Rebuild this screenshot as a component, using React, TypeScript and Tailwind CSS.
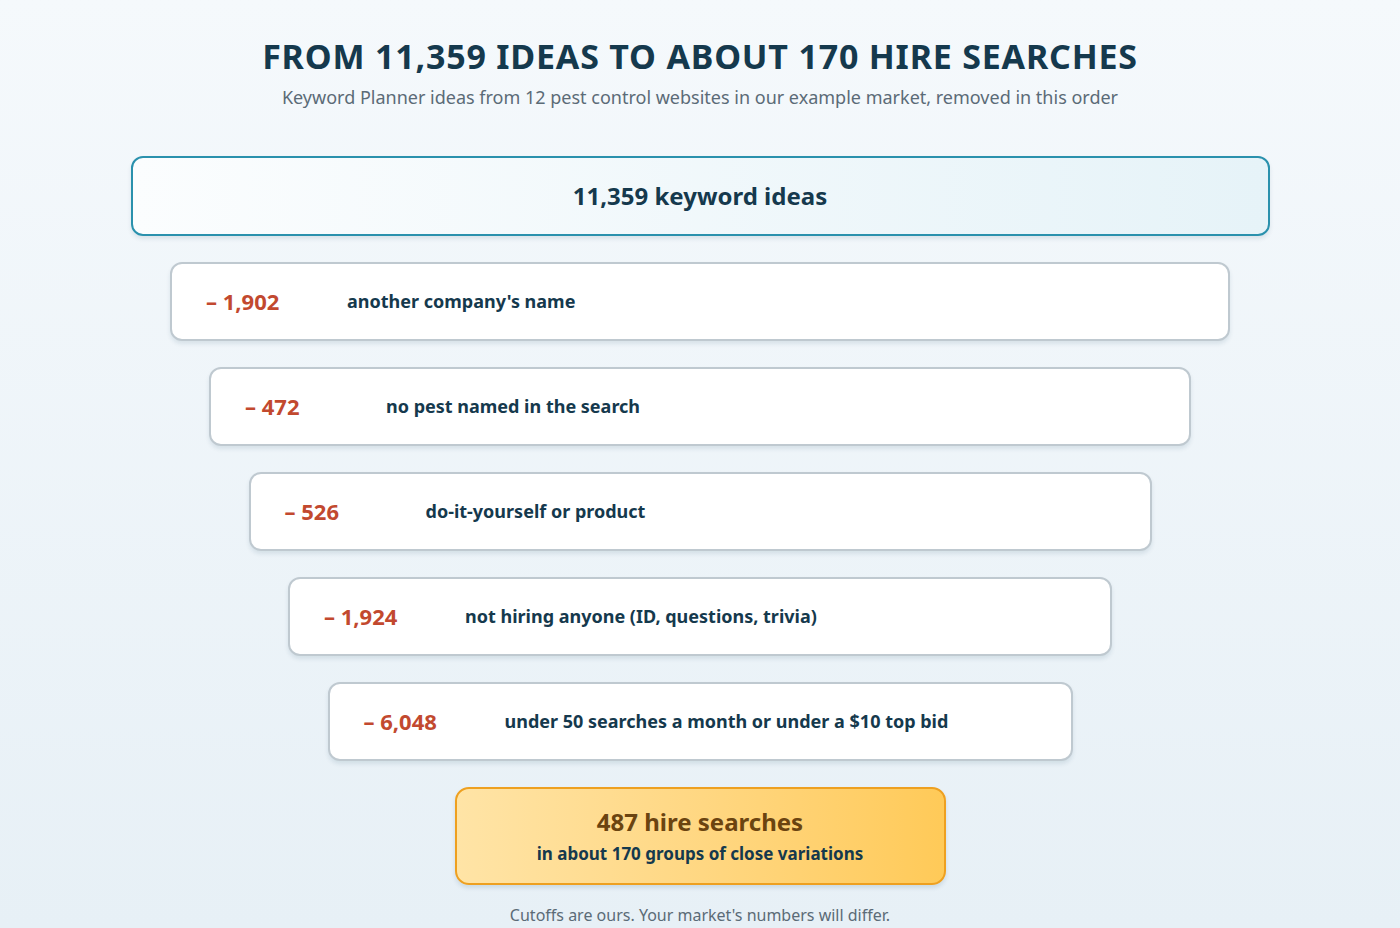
export default function App() {
  const rows = [
    { n: "– 1,902", t: "another company's name", w: "w-[1060px]" },
    { n: "– 472", t: "no pest named in the search", w: "w-[982px]" },
    { n: "– 526", t: "do-it-yourself or product", w: "w-[903px]" },
    { n: "– 1,924", t: "not hiring anyone (ID, questions, trivia)", w: "w-[824px]" },
    { n: "– 6,048", t: "under 50 searches a month or under a $10 top bid", w: "w-[745px]" },
  ];
  return (
    <div className="w-[1400px] h-[928px] overflow-hidden bg-gradient-to-b from-[#f5f9fc] to-[#e7f0f6] flex flex-col items-center font-['Liberation_Sans']">
      <h1 className="mt-[35px] text-[34px] leading-[42px] font-bold tracking-[0.8px] text-[#15394d]">FROM 11,359 IDEAS TO ABOUT 170 HIRE SEARCHES</h1>
      <p className="mt-[9px] text-[18px] leading-[22px] text-[#5b6b77]">Keyword Planner ideas from 12 pest control websites in our example market, removed in this order</p>
      <div className="mt-[48px] flex flex-col items-center gap-[26px]">
        <div className="w-[1139px] h-[80px] rounded-[12px] border-2 border-[#2a91ad] bg-gradient-to-r from-[#fbfdfe] to-[#e6f3f8] shadow-[0_3px_4px_rgba(0,60,90,0.1)] flex items-center justify-center text-[24px] font-bold text-[#15394d]">
          11,359 keyword ideas
        </div>
        {rows.map((r) => (
          <div key={r.n} className={`${r.w} h-[79px] rounded-[12px] border-2 border-[#bfc9d0] bg-white shadow-[0_3px_4px_rgba(0,60,90,0.1)] flex items-center pl-[34px]`}>
            <span className="w-[141px] text-[22px] font-bold text-[#c2492f]">{r.n}</span>
            <span className="text-[18px] font-bold text-[#15394d]">{r.t}</span>
          </div>
        ))}
        <div className="w-[491px] h-[98px] rounded-[14px] border-2 border-[#eea020] bg-gradient-to-r from-[#ffe4a6] to-[#ffca58] shadow-[0_3px_4px_rgba(0,60,90,0.12)] flex flex-col items-center justify-center">
          <span className="text-[24px] leading-[28px] font-bold text-[#6b4410]">487 hire searches</span>
          <span className="mt-[8px] text-[17px] leading-[20px] font-bold text-[#15394d]">in about 170 groups of close variations</span>
        </div>
      </div>
      <p className="mt-[18px] text-[16px] text-[#5b6b77]">Cutoffs are ours. Your market's numbers will differ.</p>
    </div>
  );
}
